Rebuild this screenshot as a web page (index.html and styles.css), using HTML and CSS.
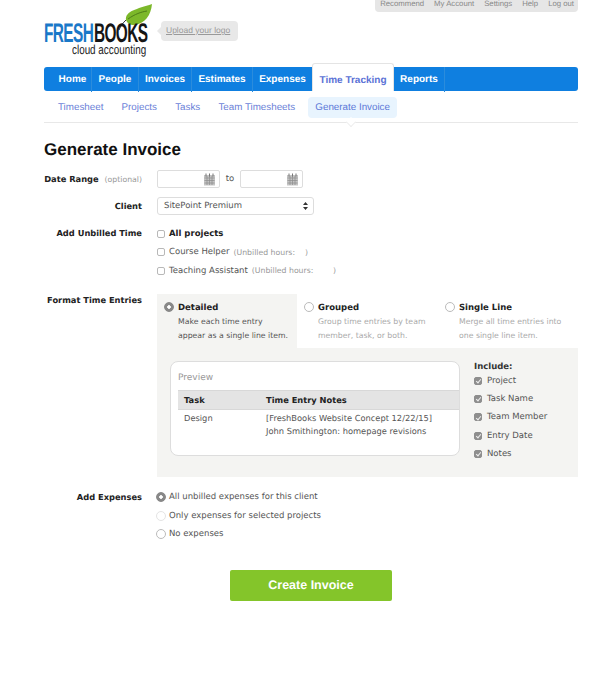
FILE: index.html
```html
<!DOCTYPE html>
<html lang="en">
<head>
	<meta charset="utf-8">
	<title>Generate Invoice - FreshBooks</title>
	<link rel="stylesheet" href="styles.css">
</head>
<body>
	<div class="page">
		<div class="toplinks">
			<a>Recommend</a><a>My Account</a><a>Settings</a><a>Help</a><a>Log out</a>
		</div>
		<header class="brand">
			<div class="logo">
				<svg class="leaf" width="36" height="28" viewBox="0 0 36 28">
					<path d="M2 27C4 22 6 20 9 17" fill="none" stroke="#333" stroke-width="1"/>
					<path d="M9 17C8 8 20 6 35 1C34 12 28 21 17 22C13 22 10 20 9 17Z" fill="#7cb82a"/>
					<path d="M11 16C18 11 24 9 30 8" fill="none" stroke="#4d7d18" stroke-width="1"/>
				</svg>
				<div class="logo-name"><span class="logo-fresh">FRESH</span><span class="logo-books">BOOKS</span></div>
				<div class="logo-sub">cloud accounting</div>
			</div>
			<a class="upload">Upload your logo</a>
		</header>
		<nav class="mainnav">
			<a class="first">Home</a><a>People</a><a>Invoices</a><a>Estimates</a><a class="before-active">Expenses</a><a class="active">Time Tracking</a><a>Reports</a>
		</nav>
		<nav class="subnav">
			<a>Timesheet</a><a>Projects</a><a>Tasks</a><a>Team Timesheets</a><a class="current">Generate Invoice</a>
		</nav>
		<h1>Generate Invoice</h1>

		<div class="row row-date">
			<div class="label">Date Range <small>(optional)</small></div>
			<div class="dates">
				<span class="field">
					<svg width="13" height="13" viewBox="0 0 13 13"><rect x="1" y="2" width="11" height="10.5" fill="#c4c4c4"/><path d="M1.500 5h10M1.500 7.500h10M1.500 10h10M4 3v9M6.500 3v9M9 3v9" stroke="#8d8d8d" stroke-width=".7"/><path d="M3 .5v3M6.500 .5v3M10 .5v3" stroke="#777"/></svg>
				</span>
				<span class="to">to</span>
				<span class="field">
					<svg width="13" height="13" viewBox="0 0 13 13"><rect x="1" y="2" width="11" height="10.5" fill="#c4c4c4"/><path d="M1.500 5h10M1.500 7.500h10M1.500 10h10M4 3v9M6.500 3v9M9 3v9" stroke="#8d8d8d" stroke-width=".7"/><path d="M3 .5v3M6.500 .5v3M10 .5v3" stroke="#777"/></svg>
				</span>
			</div>
		</div>

		<div class="row row-client">
			<div class="label">Client</div>
			<div class="select">
				SitePoint Premium
				<svg width="5" height="8" viewBox="0 0 5 8"><path d="M2.500 0L5 3H0ZM2.500 8L0 5H5Z" fill="#333"/></svg>
			</div>
		</div>

		<div class="row row-unbilled">
			<div class="label">Add Unbilled Time</div>
			<div class="stack">
				<div class="opt strong"><span class="check"></span>All projects</div>
				<div class="opt"><span class="check"></span>Course Helper <small>(Unbilled hours: &nbsp; &nbsp;)</small></div>
				<div class="opt"><span class="check"></span>Teaching Assistant <small>(Unbilled hours: &nbsp; &nbsp; &nbsp; &nbsp;)</small></div>
			</div>
		</div>

		<div class="row row-format">
			<div class="label">Format Time Entries</div>
			<div class="format">
				<div class="tabs">
					<div class="tab selected">
						<span class="radio on"></span>
						<div><b>Detailed</b><p>Make each time entry appear as a single line item.</p></div>
					</div>
					<div class="tab">
						<span class="radio"></span>
						<div><b>Grouped</b><p>Group time entries by team member, task, or both.</p></div>
					</div>
					<div class="tab">
						<span class="radio"></span>
						<div><b>Single Line</b><p>Merge all time entries into one single line item.</p></div>
					</div>
				</div>
				<div class="format-body">
					<div class="preview">
						<div class="preview-title">Preview</div>
						<div class="preview-head"><span class="col-task">Task</span><span>Time Entry Notes</span></div>
						<div class="preview-line"><span class="col-task">Design</span><span>[FreshBooks Website Concept 12/22/15]<br>John Smithington: homepage revisions</span></div>
					</div>
					<div class="include">
						<div class="include-title">Include:</div>
						<div class="inc"><span class="check on"></span>Project</div>
						<div class="inc"><span class="check on"></span>Task Name</div>
						<div class="inc"><span class="check on"></span>Team Member</div>
						<div class="inc"><span class="check on"></span>Entry Date</div>
						<div class="inc"><span class="check on"></span>Notes</div>
					</div>
				</div>
			</div>
		</div>

		<div class="row row-expenses">
			<div class="label">Add Expenses</div>
			<div class="stack">
				<div class="opt"><span class="radio on"></span>All unbilled expenses for this client</div>
				<div class="opt"><span class="radio faint"></span>Only expenses for selected projects</div>
				<div class="opt"><span class="radio"></span>No expenses</div>
			</div>
		</div>

		<div class="actions"><a class="create">Create Invoice</a></div>
	</div>
</body>
</html>
```
FILE: styles.css
```css
* {
	box-sizing: border-box;
}
body {
	margin: 0;
	background: #fff;
	font-family: "DejaVu Sans", Verdana, sans-serif;
	font-size: 8.5px;
	color: #444;
	text-rendering: geometricPrecision;
}
.page {
	width: 534px;
	margin-left: 44px;
	height: 691px;
}
.toplinks {
	display: flex;
	justify-content: flex-end;
	gap: 10px;
	width: 203px;
	height: 12px;
	margin-left: auto;
	padding: 0 4px 0 5px;
	background: #e6e6e6;
	border-radius: 0 0 4px 4px;
	white-space: nowrap;
	font-family: "Liberation Sans", Arial, sans-serif;
	font-size: 7.75px;
	line-height: 8px;
	color: #888;
}

/* logo row */
.brand {
	display: flex;
	align-items: flex-start;
	height: 55px;
}
.logo {
	position: relative;
	width: 105px;
	height: 55px;
	font-family: "Liberation Sans", Arial, sans-serif;
}
.leaf {
	position: absolute;
	left: 73px;
	top: -9px;
}
.logo-name {
	position: absolute;
	top: 10px;
	left: 0;
	white-space: nowrap;
	font-size: 27px;
	line-height: 22px;
	font-weight: bold;
	letter-spacing: -1px;
	transform: scaleX(.57);
	transform-origin: left top;
}
.logo-fresh {
	color: #1a78c8;
}
.logo-books {
	margin-left: 1px;
	color: #151515;
}
.logo-sub {
	position: absolute;
	top: 31px;
	left: 28px;
	white-space: nowrap;
	font-size: 13px;
	line-height: 13px;
	color: #222;
	transform: scaleX(.76);
	transform-origin: left top;
}
.upload {
	position: relative;
	margin: 9px 0 0 12px;
	width: 77px;
	height: 20px;
	padding-left: 5px;
	background: #e8e8e8;
	border-radius: 4px;
	font-family: "Liberation Sans", Arial, sans-serif;
	font-size: 8.5px;
	line-height: 19px;
	color: #999;
	text-decoration: underline;
}
.upload:before {
	content: "";
	position: absolute;
	left: -4px;
	top: 6px;
	border-style: solid;
	border-width: 4px 4px 4px 0;
	border-color: transparent #e8e8e8 transparent transparent;
}

/* nav */
.mainnav {
	display: grid;
	grid-template-columns: 48px 47px 53px 61px 59px 82px 51px;
	height: 24px;
	background: #0f7fe0;
	border-radius: 3px;
	font-family: "Liberation Sans", Arial, sans-serif;
	font-size: 10px;
	font-weight: bold;
	line-height: 25px;
	color: #fff;
}
.mainnav a {
	text-align: center;
	border-right: 1px solid #2b8cdc;
}
.mainnav .first {
	padding-left: 10px;
}
.mainnav .before-active {
	border-right: 0;
}
.mainnav .active {
	height: 28px;
	margin-top: -4px;
	padding-top: 4px;
	background: #fff;
	border: 1px solid #e4e4e4;
	border-bottom: 0;
	border-radius: 3px 3px 0 0;
	color: #5b72d6;
}
.subnav {
	position: relative;
	display: flex;
	gap: 4.2px;
	height: 32px;
	padding: 6px 0 0 7px;
	border-bottom: 1px solid #e8e8e8;
	font-family: "Liberation Sans", Arial, sans-serif;
	font-size: 9.8px;
	color: #6b7fd8;
}
.subnav a {
	height: 21px;
	padding: 0 7px;
	line-height: 22px;
}
.subnav .current {
	margin-left: 2px;
	background: #e8f4fe;
	border-radius: 4px;
	color: #5b78d8;
}
.subnav .current:after {
	content: "";
	position: absolute;
	left: 302px;
	top: 31px;
	width: 9px;
	height: 9px;
	background: #fff;
	border-right: 1px solid #e8e8e8;
	border-bottom: 1px solid #e8e8e8;
	transform: translateY(-5px) rotate(45deg) scale(.7);
}
h1 {
	margin: 16px 0 9px;
	font-family: "Liberation Sans", Arial, sans-serif;
	font-size: 17px;
	line-height: 22px;
	color: #111;
}

/* form rows */
.row {
	display: flex;
}
.label {
	flex: none;
	width: 98px;
	margin-right: 15px;
	text-align: right;
	white-space: nowrap;
	font-weight: bold;
	font-size: 8.3px;
	color: #222;
}
.label small,
.opt small {
	font-weight: normal;
	font-size: 7.75px;
	color: #999;
}
.label small {
	margin-left: 3px;
}
.row-date {
	height: 18px;
	line-height: 18px;
}
.dates {
	display: flex;
}
.field {
	display: flex;
	justify-content: flex-end;
	align-items: center;
	width: 63px;
	height: 18px;
	padding-right: 3px;
	border: 1px solid #ddd;
	border-radius: 2px;
}
.to {
	width: 20px;
	text-align: center;
	color: #555;
}
.row-client {
	height: 18px;
	margin-top: 9px;
	line-height: 18px;
}
.select {
	display: flex;
	justify-content: space-between;
	align-items: center;
	width: 157px;
	height: 18px;
	padding: 0 5px 0 6px;
	border: 1px solid #ddd;
	border-radius: 3px;
	color: #555;
}
.row-unbilled {
	margin-top: 10px;
}
.row-unbilled .label {
	line-height: 17px;
}
.stack {
	display: flex;
	flex-direction: column;
	gap: 1px;
}
.opt {
	display: flex;
	align-items: center;
	height: 17.5px;
	white-space: nowrap;
	color: #555;
}
.opt small {
	margin-left: 4px;
}
.opt.strong {
	font-weight: bold;
	color: #222;
}
.check {
	flex: none;
	width: 8px;
	height: 8px;
	margin-right: 4px;
	background: #fff;
	border: 1px solid #b8b8b8;
	border-radius: 2px;
}
.check.on {
	position: relative;
	background: #8e8e8e;
	border-color: #8e8e8e;
}
.check.on:after {
	content: "";
	position: absolute;
	left: 1.5px;
	top: .5px;
	width: 2px;
	height: 4px;
	border: solid #eee;
	border-width: 0 1px 1px 0;
	transform: rotate(40deg);
}
.radio {
	flex: none;
	width: 10px;
	height: 10px;
	background: #fff;
	border: 1px solid #bbb;
	border-radius: 50%;
}
.radio.on {
	background: radial-gradient(circle, #fff 0 1.5px, #888 2px);
	border-color: #888;
}
.radio.faint {
	border-color: #e4e4e4;
}

/* format time entries */
.row-format {
	margin-top: 14px;
}
.row-format .label {
	line-height: 13px;
}
.format {
	width: 421px;
}
.tabs {
	display: flex;
	height: 54px;
	font-size: 7.75px;
	line-height: 14px;
}
.tab {
	display: flex;
	padding: 7px 0 0 7px;
	color: #aaa;
}
.tab:nth-child(1) {
	width: 140px;
}
.tab:nth-child(2) {
	width: 141px;
}
.tab:nth-child(3) {
	width: 140px;
}
.tab.selected {
	background: #f4f4f2;
	color: #555;
}
.tab .radio {
	margin: 1px 4px 0 0;
}
.tab b {
	font-size: 8.5px;
	color: #222;
}
.tab p {
	margin: 0;
	width: 112px;
}
.format-body {
	display: flex;
	height: 129px;
	padding: 13px 0 0 13px;
	background: #f4f4f2;
}
.preview {
	width: 290px;
	height: 95px;
	padding-top: 9px;
	background: #fff;
	border: 1px solid #ddd;
	border-radius: 8px;
	font-size: 8.3px;
	color: #555;
}
.preview-title {
	height: 19px;
	padding-left: 7px;
	font-size: 9px;
	line-height: 14px;
	color: #999;
}
.preview-head {
	display: flex;
	height: 20px;
	margin-left: 7px;
	padding-left: 6px;
	background: #e4e4e4;
	border-top: 1px solid #d8d8d8;
	border-bottom: 1px solid #d8d8d8;
	font-weight: bold;
	line-height: 18px;
	color: #222;
}
.col-task {
	flex: none;
	width: 82px;
}
.preview-line {
	display: flex;
	margin-top: 2px;
	padding-left: 13px;
	line-height: 13px;
}
.include {
	margin-left: 14px;
}
.include-title {
	height: 11px;
	font-weight: bold;
	line-height: 12px;
	color: #333;
}
.inc {
	display: flex;
	align-items: center;
	height: 18.3px;
	color: #555;
}
.inc .check {
	margin-right: 5px;
}
.row-expenses {
	margin-top: 12px;
}
.row-expenses .label {
	line-height: 17px;
}
.row-expenses .radio {
	margin: 0 3px 0 -1px;
}

.actions {
	margin: 27px 0 0 186px;
}
.create {
	display: block;
	width: 162px;
	height: 31px;
	background: #84c52a;
	border-radius: 2px;
	text-align: center;
	font-family: "Liberation Sans", Arial, sans-serif;
	font-size: 12.5px;
	font-weight: bold;
	line-height: 30px;
	color: #fff;
}
```
